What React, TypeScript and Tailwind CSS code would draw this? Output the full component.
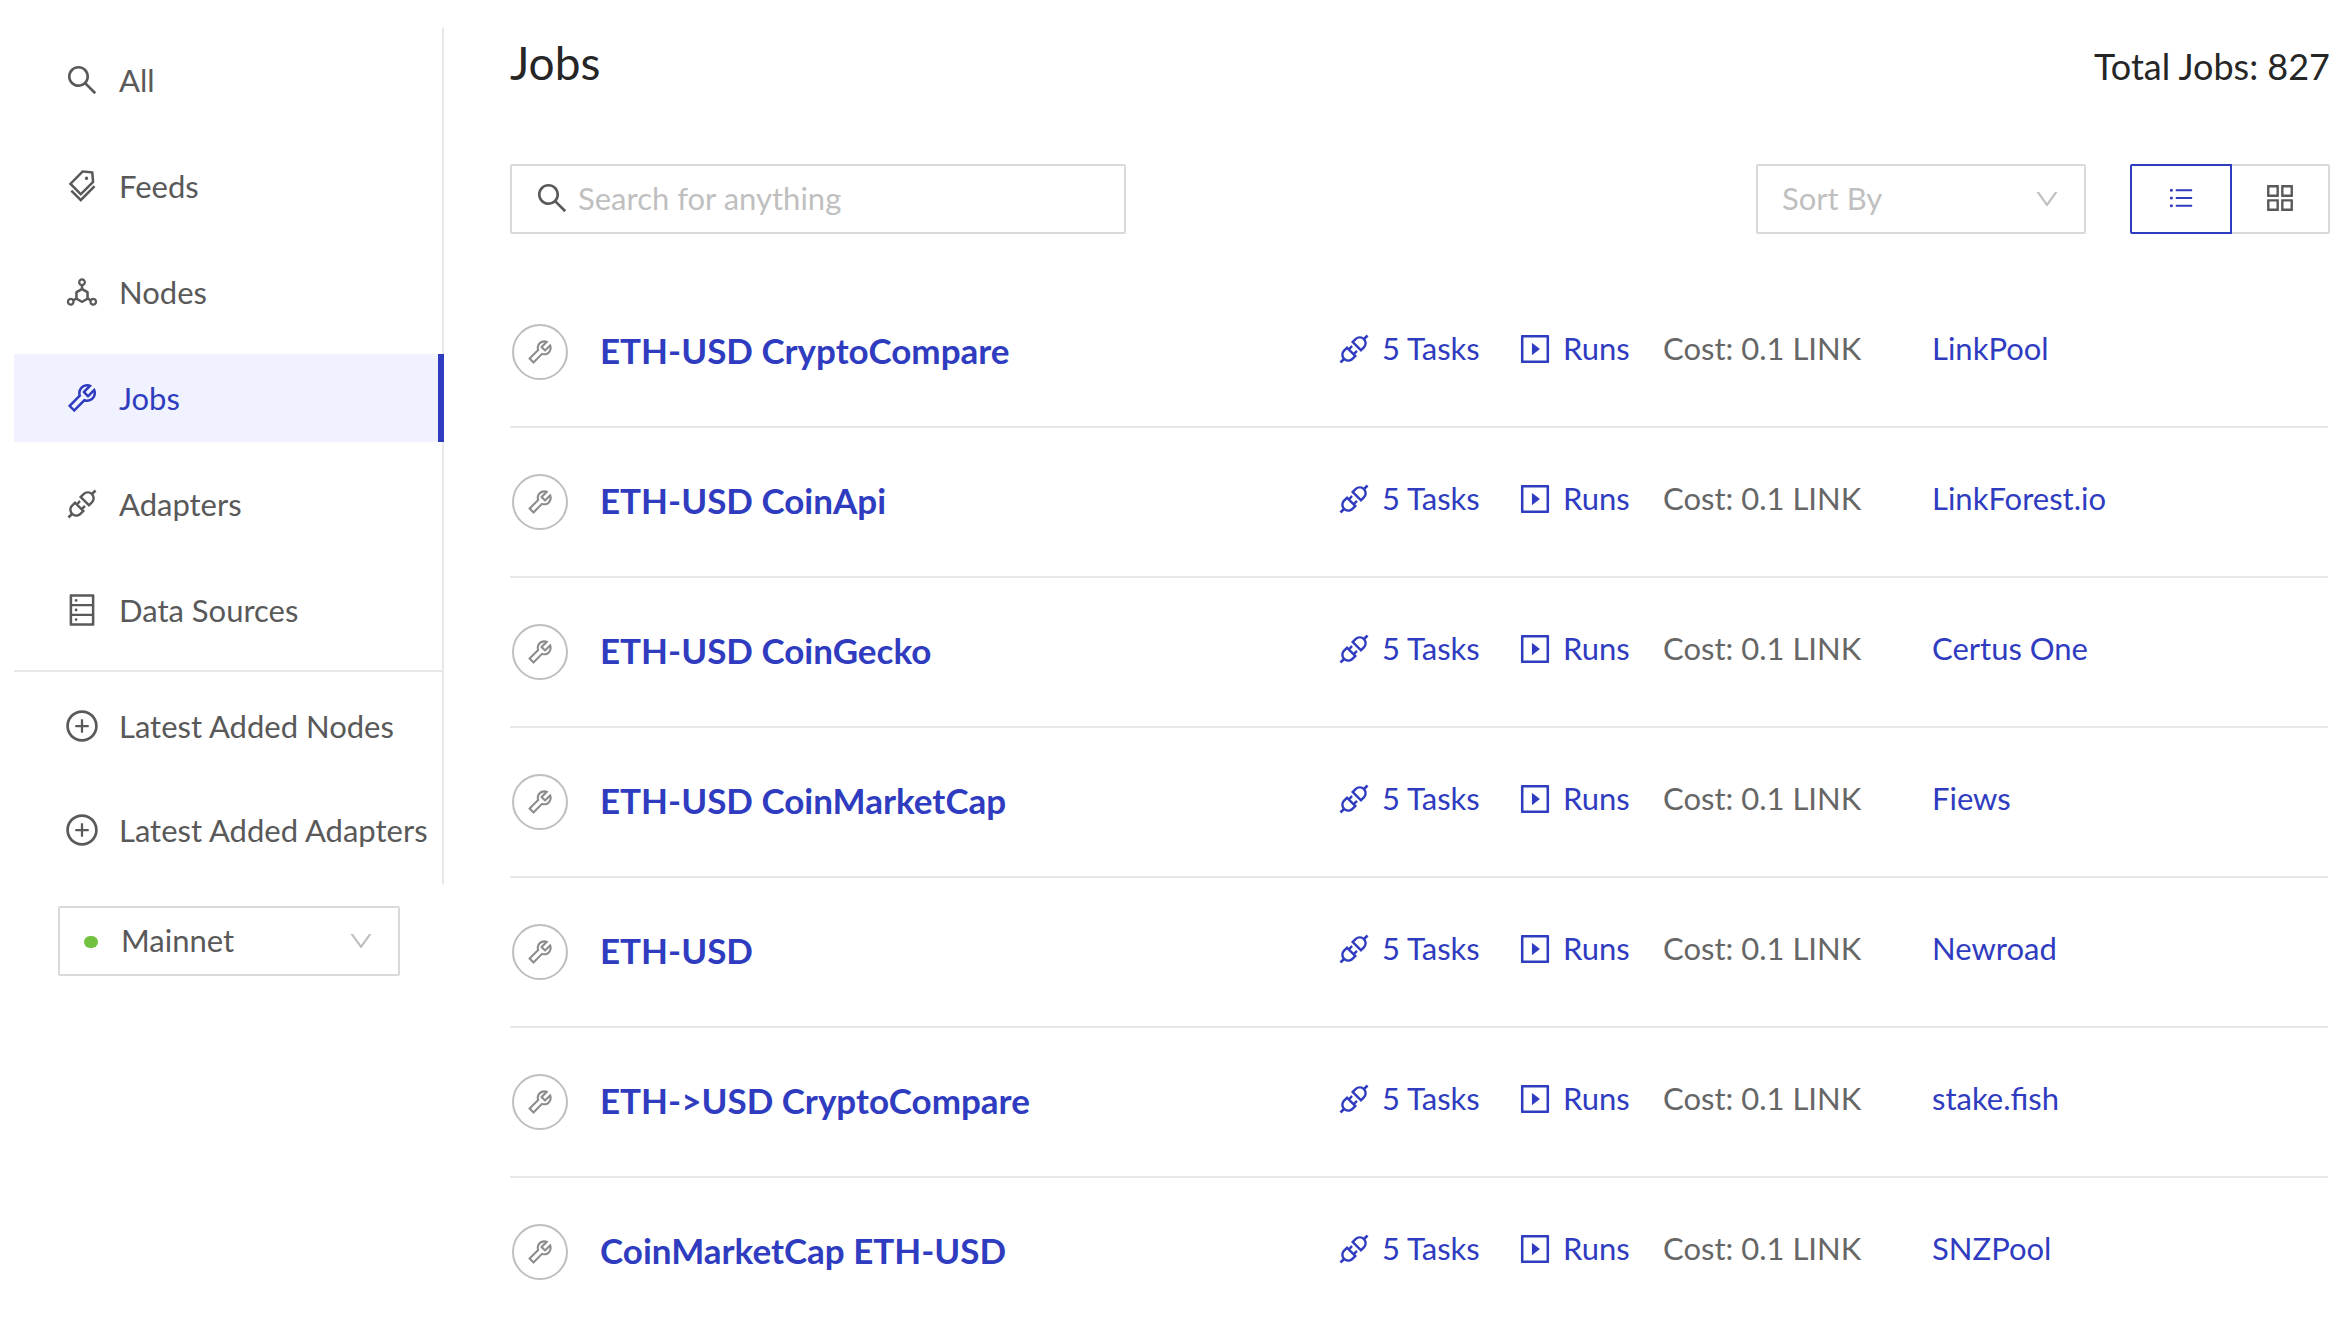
import React, { useState } from 'react';
import {
  AiOutlineApi,
  AiOutlineAppstore,
  AiOutlineDatabase,
  AiOutlineDeploymentUnit,
  AiOutlineDown,
  AiOutlinePlaySquare,
  AiOutlinePlusCircle,
  AiOutlineSearch,
  AiOutlineTags,
  AiOutlineTool,
  AiOutlineUnorderedList,
} from 'react-icons/ai';
import type { IconType } from 'react-icons';

interface MenuEntry {
  label: string;
  icon: IconType;
}

interface Job {
  name: string;
  tasks: number;
  cost: string;
  node: string;
}

const mainMenu: MenuEntry[] = [
  { label: 'All', icon: AiOutlineSearch },
  { label: 'Feeds', icon: AiOutlineTags },
  { label: 'Nodes', icon: AiOutlineDeploymentUnit },
  { label: 'Jobs', icon: AiOutlineTool },
  { label: 'Adapters', icon: AiOutlineApi },
  { label: 'Data Sources', icon: AiOutlineDatabase },
];

const latestMenu: MenuEntry[] = [
  { label: 'Latest Added Nodes', icon: AiOutlinePlusCircle },
  { label: 'Latest Added Adapters', icon: AiOutlinePlusCircle },
];

const jobs: Job[] = [
  { name: 'ETH-USD CryptoCompare', tasks: 5, cost: '0.1', node: 'LinkPool' },
  { name: 'ETH-USD CoinApi', tasks: 5, cost: '0.1', node: 'LinkForest.io' },
  { name: 'ETH-USD CoinGecko', tasks: 5, cost: '0.1', node: 'Certus One' },
  { name: 'ETH-USD CoinMarketCap', tasks: 5, cost: '0.1', node: 'Fiews' },
  { name: 'ETH-USD', tasks: 5, cost: '0.1', node: 'Newroad' },
  { name: 'ETH->USD CryptoCompare', tasks: 5, cost: '0.1', node: 'stake.fish' },
  { name: 'CoinMarketCap ETH-USD', tasks: 5, cost: '0.1', node: 'SNZPool' },
];

const MenuItem: React.FC<{ entry: MenuEntry; active?: boolean }> = ({ entry, active }) => {
  const Icon = entry.icon;
  return (
    <li>
      <a
        href="#"
        aria-current={active ? 'page' : undefined}
        className={
          active
            ? 'flex h-[88px] items-center gap-[19px] border-r-6 border-[#2f3cc0] bg-[#f0f2ff] pl-[50px] whitespace-nowrap text-[#2f3cc0]'
            : 'flex h-[88px] items-center gap-[19px] pl-[50px] whitespace-nowrap text-[#595959]'
        }
      >
        <Icon className="size-9 shrink-0" />
        {entry.label}
      </a>
    </li>
  );
};

const Sidebar: React.FC = () => (
  <aside className="w-[430px] shrink-0">
    {/* The right rule is drawn inside the box so the active marker can cover it */}
    <nav className="bg-linear-to-l from-[#e8e8e8] from-[2px] to-transparent to-[2px] pt-2 pb-[10px]">
      <ul className="flex flex-col gap-[18px]">
        {mainMenu.map(entry => (
          <MenuItem key={entry.label} entry={entry} active={entry.label === 'Jobs'} />
        ))}
      </ul>
      <ul className="mt-4 flex flex-col gap-4 border-t-2 border-[#e8e8e8] pt-[10px]">
        {latestMenu.map(entry => (
          <MenuItem key={entry.label} entry={entry} />
        ))}
      </ul>
    </nav>

    <div className="relative mt-[22px] ml-11 w-[342px]">
      <span className="absolute top-[30px] left-[26px] h-3 w-[14px] rounded-full bg-[#73c23f]" />
      <select
        aria-label="Network"
        className="h-[70px] w-full appearance-none rounded-xs border-2 border-[#d9d9d9] bg-transparent pb-0.5 pl-[61px] text-[#595959]"
      >
        <option>Mainnet</option>
        <option>Ropsten</option>
      </select>
      <AiOutlineDown className="pointer-events-none absolute top-[21px] right-[25px] size-7 text-[#bfbfbf]" />
    </div>
  </aside>
);

const Toolbar: React.FC = () => {
  const [view, setView] = useState<'list' | 'grid'>('list');

  const active = 'relative z-10 border-[#2f3cc0] text-[#2f3cc0]';
  const idle = 'border-[#d9d9d9] text-[#595959]';

  return (
    <div className="mb-11 flex items-center">
      <label className="flex h-[70px] w-[616px] items-center gap-2 rounded-xs border-2 border-[#d9d9d9] pb-0.5 pl-[22px]">
        <AiOutlineSearch className="size-9 shrink-0 text-[#595959]" />
        <input
          type="text"
          aria-label="Search jobs"
          placeholder="Search for anything"
          className="w-full bg-transparent outline-none placeholder:text-[#bfbfbf]"
        />
      </label>

      <div className="relative mr-11 ml-auto w-[330px]">
        <select
          aria-label="Sort jobs"
          className="h-[70px] w-full appearance-none rounded-xs border-2 border-[#d9d9d9] bg-transparent pb-0.5 pl-6 text-[#bfbfbf]"
        >
          <option>Sort By</option>
          <option>Name</option>
          <option>Cost</option>
        </select>
        <AiOutlineDown className="pointer-events-none absolute top-[21px] right-[25px] size-7 text-[#bfbfbf]" />
      </div>

      <div className="flex">
        <button
          type="button"
          aria-label="List view"
          onClick={() => setView('list')}
          className={`flex h-[70px] w-[102px] items-center justify-center rounded-l-xs border-2 pb-0.5 ${view === 'list' ? active : idle}`}
        >
          <AiOutlineUnorderedList className="size-7" />
        </button>
        <button
          type="button"
          aria-label="Grid view"
          onClick={() => setView('grid')}
          className={`-ml-0.5 flex h-[70px] w-[100px] items-center justify-center rounded-r-xs border-2 pb-0.5 ${view === 'grid' ? active : idle}`}
        >
          <AiOutlineAppstore className="size-9" />
        </button>
      </div>
    </div>
  );
};

const JobRow: React.FC<{ job: Job }> = ({ job }) => (
  <li className="mr-0.5 grid grid-cols-[90px_1fr_181px_146px_269px_396px] border-b-2 border-[#e8e8e8] py-[46px] leading-[48px] last:border-b-0">
    <span className="ml-0.5 flex size-14 items-center justify-center rounded-full border-2 border-[#bfbfbf] text-[#8c8c8c]">
      <AiOutlineTool className="size-[30px]" />
    </span>
    <a href="#" className="text-[35px]/[52px] font-bold text-[#2f3cc0]">
      {job.name}
    </a>
    <a href="#" className="flex items-start gap-[10px] text-[#2f3cc0]">
      <AiOutlineApi className="mt-[7px] size-9" />
      {job.tasks} Tasks
    </a>
    <a href="#" className="flex items-start gap-[10px] text-[#2f3cc0]">
      <AiOutlinePlaySquare className="mt-[7px] size-9" />
      Runs
    </a>
    <span className="text-[#666666]">Cost: {job.cost} LINK</span>
    <a href="#" className="text-[#2f3cc0]">
      {job.node}
    </a>
  </li>
);

export default function App() {
  return (
    <div className="flex items-start gap-[66px] bg-white pt-7 pr-3 pl-[14px] font-['Lato',sans-serif] text-[31px]/[44px] text-[#262626]">
      <Sidebar />
      <main className="min-w-0 flex-1">
        <header className="mb-[66px] flex items-baseline justify-between">
          <h1 className="text-[46px]/[70px]">Jobs</h1>
          <p className="text-4xl">Total Jobs: 827</p>
        </header>
        <Toolbar />
        <ul>
          {jobs.map(job => (
            <JobRow key={job.name} job={job} />
          ))}
        </ul>
      </main>
    </div>
  );
}
